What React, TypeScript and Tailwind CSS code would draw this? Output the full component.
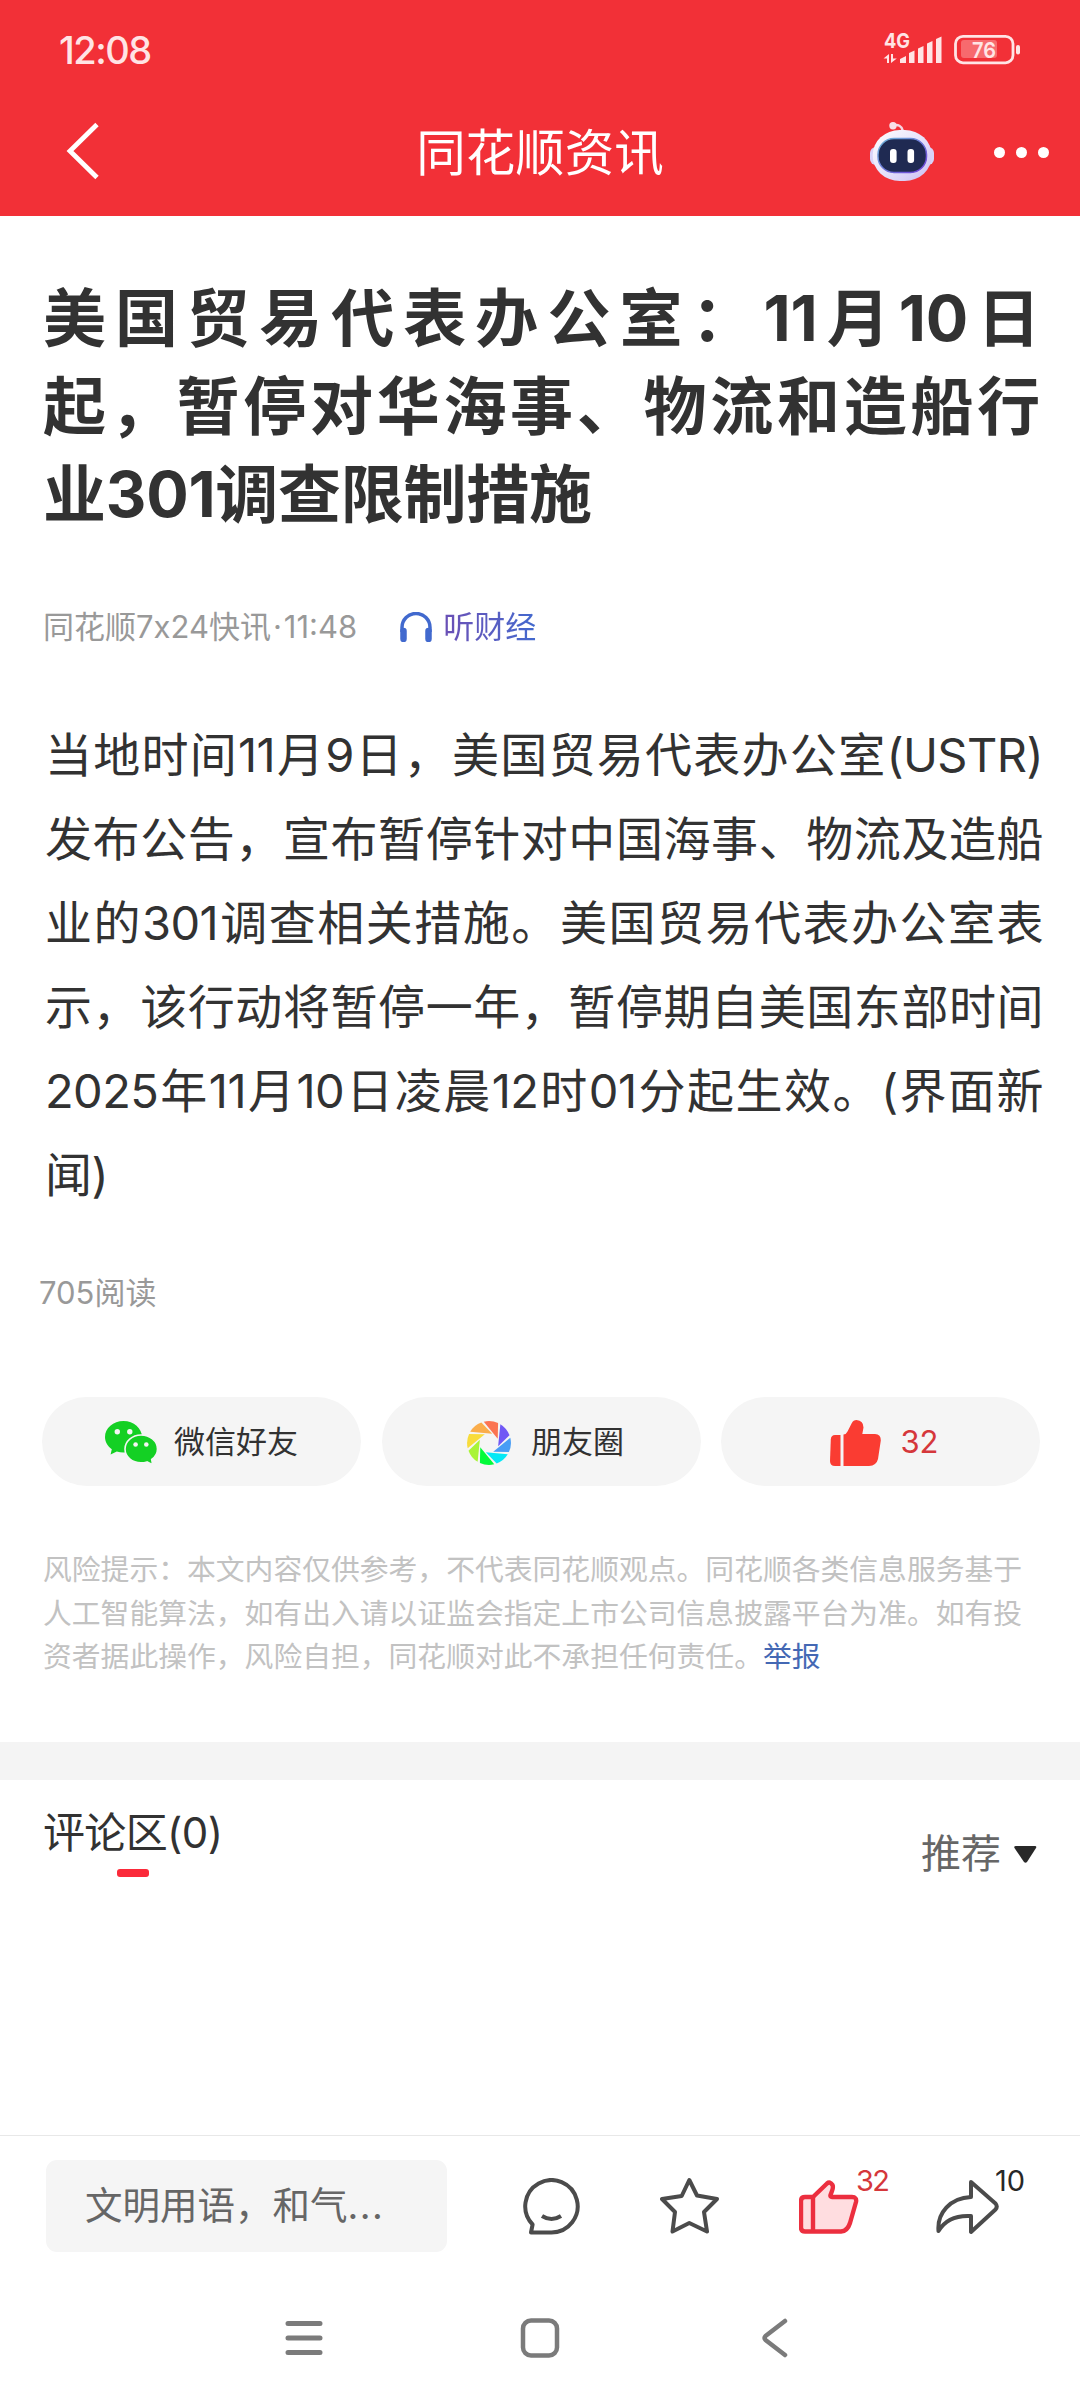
import type { ReactNode } from 'react';

const titleLines = ['美国贸易代表办公室：11月10日', '起，暂停对华海事、物流和造船行', '业301调查限制措施'];

const bodyLines = [
  '当地时间11月9日，美国贸易代表办公室(USTR)',
  '发布公告，宣布暂停针对中国海事、物流及造船',
  '业的301调查相关措施。美国贸易代表办公室表',
  '示，该行动将暂停一年，暂停期自美国东部时间',
  '2025年11月10日凌晨12时01分起生效。(界面新',
  '闻)',
];

const blades = ['#fb7452', '#7058f5', '#489df5', '#04e8f5', '#02fb39', '#a9f438', '#f8dc3c', '#faad4b'];

function StatusIcons() {
  return (
    <svg width="142" height="52" viewBox="880 24 142 52" fill="#ffe4e5">
      <text x="884" y="48" fontSize="20" fontWeight="700" textLength="26" lengthAdjust="spacingAndGlyphs">
        4G
      </text>
      <path d="M889 54v9h-2v-4.500h-3.500z M891 63v-9h2v4.500h3.800z" />
      <path d="M900 63v-4l6-3v7z M909 63V53l5.500-2.500V63z M918 63V48.500l5.500-2.500V63z M927 63V43.500l5.500-2.500V63z M936 63V39l5.500-2.500V63z" />
      <rect x="955.500" y="36.300" width="57.500" height="26.500" rx="7.500" fill="none" stroke="#ffe4e5" strokeWidth="2.800" />
      <rect x="961" y="40" width="36" height="18" rx="3" fill="#f76a6e" />
      <rect x="1016" y="45" width="4" height="9.500" rx="2" />
      <text x="984" y="57.500" fontSize="22" fontWeight="600" textAnchor="middle" textLength="24" lengthAdjust="spacingAndGlyphs">
        76
      </text>
    </svg>
  );
}

function RobotIcon() {
  return (
    <svg width="66" height="62" viewBox="869 120 66 62">
      <defs>
        <linearGradient id="head" x1="0" y1="0" x2="1" y2="1">
          <stop offset="0" stopColor="#ffffff" />
          <stop offset="0.6" stopColor="#e2dcfa" />
          <stop offset="1" stopColor="#c9bdf2" />
        </linearGradient>
        <linearGradient id="rim" x1="0" y1="0" x2="1" y2="1">
          <stop offset="0" stopColor="#6fb7d8" />
          <stop offset="1" stopColor="#6d3bd8" />
        </linearGradient>
      </defs>
      <path d="M893 124.500q8-2 9.700 5" fill="none" stroke="#f6d5e2" strokeWidth="2.500" />
      <circle cx="893" cy="124.700" r="3.700" fill="#f8dfe8" />
      <rect x="870" y="146" width="64" height="18" rx="6" fill="#d9d3f8" />
      <rect x="872.700" y="129" width="59" height="51" rx="27" ry="25" fill="url(#head)" />
      <rect x="878" y="137.500" width="48.500" height="34" rx="16" fill="#1f2a52" stroke="url(#rim)" strokeWidth="1.500" />
      <rect x="890" y="148" width="6.600" height="14" rx="3" fill="#fff" />
      <rect x="907.500" y="148" width="6.600" height="14" rx="3" fill="#fff" />
    </svg>
  );
}

function WechatIcon() {
  return (
    <svg width="53" height="44" viewBox="0 0 53 44" fill="#14d024">
      <path d="M18.500 0C8.300 0 0 7 0 16c0 5 2.600 9.200 6.800 12.200L5.600 33.500l6.200-2.900c2.100.6 4.400.9 6.700.9 10.200 0 18.500-7 18.500-15.500S28.700 0 18.500 0z" />
      <path
        d="M36 14c8.800 0 16.500 6 16.500 14 0 4.300-2.300 8-5.800 10.500l.9 5.200-5.600-2.800c-1.900.6-3.900.9-6 .9-8.800 0-16-6-16-13.800S27.200 14 36 14z"
        stroke="#f5f5f5"
        strokeWidth="1.600"
      />
      <g fill="#f5f5f5">
        <circle cx="12.300" cy="10.700" r="2.700" />
        <circle cx="24.800" cy="10.700" r="2.700" />
        <circle cx="30.600" cy="23.500" r="2.300" />
        <circle cx="41.300" cy="23.500" r="2.300" />
      </g>
    </svg>
  );
}

function MomentsIcon() {
  return (
    <svg width="44" height="44" viewBox="-63 -63 126 126">
      {blades.map((color, i) => (
        <path key={color} d="M-15-61A62 62 0 0 1 26-57L25-12Z" fill={color} transform={`rotate(${i * 45})`} />
      ))}
    </svg>
  );
}

function ThumbIcon() {
  return (
    <svg width="51" height="46" viewBox="0 0 51 46" fill="#fa3c32">
      <path d="M5 15h5.500v31H5q-5 0-5-5L.8 19.500Q1 15 5 15z" />
      <path d="M13.500 46V14.500q3-.5 4-3l4.200-8.300Q23.400 0 26.500 0q7 .6 7 7.500L32.300 14H45q6 .4 5.800 6.500L48 39q-1.500 6.500-9 7z" />
    </svg>
  );
}

function SharePill({ icon, children, className = '' }: { icon: ReactNode; children: ReactNode; className?: string }) {
  return (
    <button className={`flex h-[89px] w-[319px] items-center justify-center rounded-full bg-[#f5f5f5] pt-[2px] text-[31px] ${className}`}>
      {icon}
      <span>{children}</span>
    </button>
  );
}

function JustifiedLines({ lines }: { lines: string[] }) {
  return (
    <>
      {lines.map((line, i) => (
        <span
          key={line}
          className={`block whitespace-nowrap ${i < lines.length - 1 ? '[text-align-last:justify]' : ''}`}
        >
          {line}
        </span>
      ))}
    </>
  );
}

export default function App() {
  return (
    <div className="flex h-[2400px] w-[1080px] flex-col overflow-hidden bg-white font-['Inter','Noto_Sans_CJK_SC',sans-serif] text-[#323232]">
      {/* Status bar and header */}
      <header className="flex h-[216px] flex-none flex-col bg-[#f23037] text-white">
        <div className="flex h-[100px] items-center justify-between pr-[58px] pl-[59px]">
          <span className="text-[38px] font-medium tracking-[-0.04em] text-[#ffe4e5]">12:08</span>
          <StatusIcons />
        </div>
        <div className="grid h-[104px] grid-cols-3 items-center">
          <svg className="mt-[-3px] ml-[65px]" width="36" height="58" viewBox="0 0 36 58" fill="none" stroke="#fff" strokeWidth="4.800">
            <path d="M32 2.500L5 29l27 26.500" />
          </svg>
          <h2 className="pt-[3px] text-center text-[49.5px] leading-none">同花顺资讯</h2>
          <div className="flex items-center justify-end gap-[59px] pr-[31px]">
            <RobotIcon />
            <div className="flex gap-[11px]">
              <i className="size-[11px] rounded-full bg-white" />
              <i className="size-[11px] rounded-full bg-white" />
              <i className="size-[11px] rounded-full bg-white" />
            </div>
          </div>
        </div>
      </header>

      {/* Article */}
      <article className="flex h-[1526px] flex-none flex-col pt-[58px] pr-[40px] pl-[42px]">
        <h1 className="pl-px text-[63px] leading-[88px] font-bold tracking-[-0.004em]">
          <JustifiedLines lines={titleLines} />
        </h1>
        <div className="mt-[67px] flex h-11 items-center pl-px text-[31px] text-[#999]">
          <span>
            同花顺7x24快讯<span className="mx-[2px]">·</span>11:48
          </span>
          <svg className="mr-[10px] ml-[42px]" width="34" height="30" viewBox="0 0 34 30" fill="none" stroke="#4169ce">
            <path d="M3 20v-4.500a14 14 0 0 1 28 0V20" strokeWidth="3.500" />
            <path d="M4.500 19v8M29.500 19v8" strokeWidth="6.500" strokeLinecap="round" />
          </svg>
          <span className="bg-linear-to-r from-[#6a4fb5] to-[#4169ce] bg-clip-text text-transparent">听财经</span>
        </div>
        <div className="mt-[64px] mr-[-3px] ml-[3px] text-[47px] leading-[84px] tracking-[-0.012em]">
          <JustifiedLines lines={bodyLines} />
        </div>
        <p className="mt-[54px] -ml-[3px] text-[31px] leading-[44px] text-[#999]">705阅读</p>
        <div className="mt-[82px] flex justify-between">
          <SharePill icon={<WechatIcon />} className="gap-4">
            微信好友
          </SharePill>
          <SharePill icon={<MomentsIcon />} className="gap-5 pl-[9px]">
            朋友圈
          </SharePill>
          <SharePill icon={<ThumbIcon />} className="gap-[19px] pl-[8px] text-[#d5373b]">
            32
          </SharePill>
        </div>
        <p className="mt-[62px] pl-px text-[28.8px] leading-[43.500px] whitespace-nowrap text-[#c2c2c2]">
          风险提示：本文内容仅供参考，不代表同花顺观点。同花顺各类信息服务基于
          <br />
          人工智能算法，如有出入请以证监会指定上市公司信息披露平台为准。如有投
          <br />
          资者据此操作，风险自担，同花顺对此不承担任何责任。
          <a className="text-[#4468b4]">举报</a>
        </p>
      </article>

      <div className="h-[38px] flex-none bg-[#f4f4f4]" />

      {/* Comments */}
      <section className="flex flex-1 items-start justify-between pr-[43px] pl-[43px]">
        <div className="flex flex-col items-center pt-[33px]">
          <h3 className="text-[42px] leading-[40px] tracking-[-0.015em]">评论区(0)</h3>
          <i className="mt-[16px] h-[8px] w-[32px] rounded-[3px] bg-[#fb2a3a]" />
        </div>
        <button className="flex items-center gap-[13px] pt-[54px] text-[40px] leading-[40px] text-[#666]">
          推荐
          <svg width="23" height="17" viewBox="0 0 23 17" fill="#282828">
            <path d="M2 0h19q2 0 1 2L13 16q-1.500 1.500-3 0L.500 2Q-.500 0 2 0z" />
          </svg>
        </button>
      </section>

      {/* Comment bar */}
      <footer className="flex h-[135px] flex-none items-start border-t border-[#e8e8e8] pl-[46px]">
        <div className="mt-[24px] flex h-[92px] w-[401px] items-center rounded-[11px] bg-[#f5f5f5] pl-[39px] text-[37.500px] text-[#666]">
          文明用语，和气<span className="tracking-[0.04em]">...</span>
        </div>
        <svg className="mt-[42px] ml-[76px]" width="58" height="58" viewBox="0 0 58 58" fill="none" stroke="#4b4b4b" strokeWidth="4">
          <path d="M9.600 46.500A26.200 26.200 0 1 1 28.500 54.500H8z" strokeLinejoin="round" />
          <path d="M19 38q9.500 6 19 0" />
        </svg>
        <svg className="mt-[41px] ml-[79px]" width="60" height="58" viewBox="0 0 60 58" fill="none" stroke="#4b4b4b" strokeWidth="4" strokeLinejoin="round">
          <path d="M29.300 3L37 18.500 57 22 44 35 47 54.500 29.300 46 12.500 54.500 15 35 2 22 21.700 19z" />
        </svg>
        <div className="relative mt-[44px] ml-[79px]">
          <svg width="60" height="55" viewBox="0 0 60 55" fill="#ffdde0" stroke="#ec2f3f" strokeWidth="4.400" strokeLinejoin="round">
            <path d="M14 17L28 3.500Q31 1 33.500 5q1 2-.5 6l-1.500 4q-.5 2 1.500 2H53q5 0 4 5l-6 21q-2.500 8-9 8.500H6q-4 0-4-4V21q0-4 4-4z" />
            <path d="M14 17v34.500" />
          </svg>
          <span className="absolute -top-[15px] left-[57px] text-[29px] leading-[32px] tracking-[-0.06em] text-[#d5373b]">32</span>
        </div>
        <div className="relative mt-[43px] ml-[77px]">
          <svg width="64" height="56" viewBox="0 0 64 56" fill="none" stroke="#4b4b4b" strokeWidth="4" strokeLinejoin="round">
            <path d="M35 18V3L59.500 24.500q2.500 3 0 6L35 53V37C19 36 9 41 2.500 52 1 34 14 19 35 18z" />
          </svg>
          <span className="absolute -top-[14px] left-[59px] text-[29px] leading-[32px] text-[#282828]">10</span>
        </div>
      </footer>

      {/* System navigation */}
      <nav className="flex h-[130px] flex-none items-start pt-[47px] pl-[285px]">
        <svg width="38" height="42" viewBox="0 0 38 42" stroke="#7b7b7b" strokeWidth="5" strokeLinecap="round">
          <path d="M3 6.500h32M3 21h32M3 35.500h32" />
        </svg>
        <svg className="ml-[197px]" width="40" height="42" viewBox="0 0 40 42" fill="none" stroke="#7b7b7b" strokeWidth="4.500">
          <rect x="3" y="3.500" width="34" height="35" rx="8" />
        </svg>
        <svg className="ml-[201px]" width="27" height="42" viewBox="0 0 27 42" fill="none" stroke="#7b7b7b" strokeWidth="4.500" strokeLinecap="round" strokeLinejoin="round">
          <path d="M24 4L4.500 19q-2 2 0 4L24 38" />
        </svg>
      </nav>
    </div>
  );
}
